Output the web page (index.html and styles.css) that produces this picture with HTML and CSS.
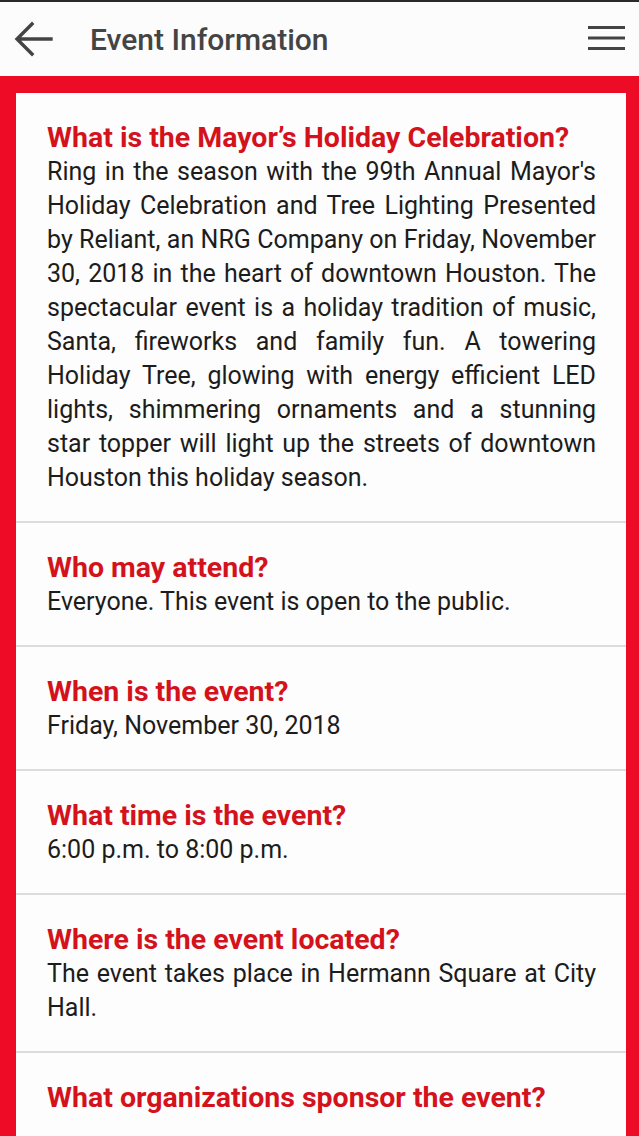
FILE: index.html
```html
<!DOCTYPE html>
<html lang="en">
<head>
  <meta charset="UTF-8" />
  <meta name="viewport" content="width=device-width, initial-scale=1.0"/>
  <title>Event Information</title>
  <link rel="stylesheet" href="styles.css">
</head>
<body>

  <header class="topbar">
    <button class="icon-btn back" aria-label="Back">
      <svg width="40" height="36" viewBox="0 0 40 36">
        <path d="M38 18H5M19 3L4 18l15 15" fill="none" stroke="#444" stroke-width="3.4" stroke-linecap="square"/>
      </svg>
    </button>
    <h1 class="title">Event Information</h1>
    <button class="icon-btn menu" aria-label="Menu">
      <svg width="37" height="26" viewBox="0 0 37 26">
        <rect x="0" y="0" width="37" height="3" fill="#444"/>
        <rect x="0" y="10.5" width="37" height="3" fill="#444"/>
        <rect x="0" y="21" width="37" height="3" fill="#444"/>
      </svg>
    </button>
  </header>

  <main class="page">
    <div class="card">
      <div class="item">
        <h2>What is the Mayor’s Holiday Celebration?</h2>
        <p>Ring in the season with the 99th Annual Mayor's Holiday Celebration and Tree Lighting Presented by Reliant, an NRG Company on Friday, November 30, 2018 in the heart of downtown Houston. The spectacular event is a holiday tradition of music, Santa, fireworks and family fun. A towering Holiday Tree, glowing with energy efficient LED lights, shimmering ornaments and a stunning star topper will light up the streets of downtown Houston this holiday season.</p>
      </div>
      <div class="item">
        <h2>Who may attend?</h2>
        <p>Everyone. This event is open to the public.</p>
      </div>
      <div class="item">
        <h2>When is the event?</h2>
        <p>Friday, November 30, 2018</p>
      </div>
      <div class="item">
        <h2>What time is the event?</h2>
        <p>6:00 p.m. to 8:00 p.m.</p>
      </div>
      <div class="item">
        <h2>Where is the event located?</h2>
        <p>The event takes place in Hermann Square at City Hall.</p>
      </div>
      <div class="item">
        <h2>What organizations sponsor the event?</h2>
      </div>
    </div>
  </main>

</body>
</html>
```

FILE: styles.css
```css
body {
  margin: 0;
  font-family: Roboto, 'Liberation Sans', sans-serif;
  background-color: #ee0b25;
  color: #1c1c1c;
}
.topbar {
  display: flex;
  align-items: center;
  height: 74px;
  background: #fcfcfc;
  border-top: 2px solid #2a2a2a;
}
.icon-btn {
  background: none;
  border: none;
  padding: 0;
  cursor: pointer;
  display: flex;
}
.back {
  margin-left: 13px;
}
.title {
  flex: 1;
  margin: 0 0 0 37px;
  font-size: 30px;
  font-weight: 500;
  color: #444;
}
.menu {
  margin-right: 14px;
}
.page {
  padding: 17px 13px 0 16px;
}
.card {
  background: #fdfdfd;
}
.item {
  padding: 28px 30px 26px 31px;
  border-bottom: 2px solid #dcdcdc;
}
.item h2 {
  margin: 0;
  font-size: 28.5px;
  line-height: 34px;
  font-weight: bold;
  color: #d4121c;
}
.item p {
  margin: 0;
  font-size: 25px;
  line-height: 34px;
  text-align: justify;
}
```
